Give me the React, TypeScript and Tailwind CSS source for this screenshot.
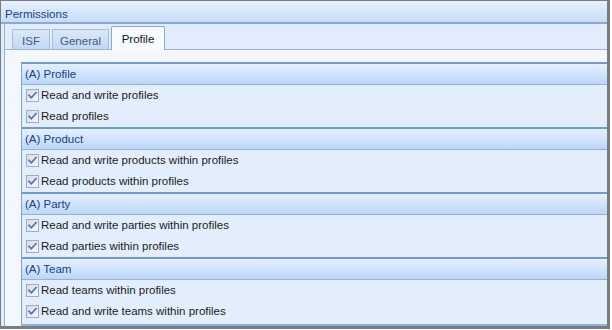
import React from 'react';

const sections = [
  { title: '(A) Profile', items: ['Read and write profiles', 'Read profiles'] },
  { title: '(A) Product', items: ['Read and write products within profiles', 'Read products within profiles'] },
  { title: '(A) Party', items: ['Read and write parties within profiles', 'Read parties within profiles'] },
  { title: '(A) Team', items: ['Read teams within profiles', 'Read and write teams within profiles'] },
];

function CheckBox() {
  return (
    <svg width="13" height="13" viewBox="0 0 13 13" className="shrink-0">
      <defs>
        <linearGradient id="cbfill" x1="0" y1="0" x2="1" y2="1">
          <stop offset="0" stopColor="#d6dbe2" />
          <stop offset="1" stopColor="#f8f9fb" />
        </linearGradient>
      </defs>
      <rect x="0.5" y="0.5" width="12" height="12" fill="url(#cbfill)" stroke="#a3acb8" />
      <path d="M3 6.3 L5.3 8.8 L10 3.6" fill="none" stroke="#4a74c9" strokeWidth="1.7" strokeLinecap="square" />
    </svg>
  );
}

function Section({ title, items }: { title: string; items: string[] }) {
  return (
    <div>
      <div className="h-[23px] border-t-2 border-t-[#6f9bd3] border-b border-b-[#8fb3e0] bg-gradient-to-b from-[#e5f0ff] to-[#bdd7f7] flex items-center pl-[3px] pt-[2px] text-[#15428b]">
        {title}
      </div>
      {items.map((item) => (
        <div key={item} className="h-[21px] flex items-center gap-[2px] pl-[4px] text-[#1b1b1b]">
          <CheckBox />
          <span>{item}</span>
        </div>
      ))}
    </div>
  );
}

export default function App() {
  return (
    <div className="w-[612px] h-[330px] bg-white font-['Liberation_Sans',Arial,sans-serif] text-[11.5px] leading-none">
      <div className="w-[610px] h-[329px] border-l border-t border-r-[3px] border-b-[3px] border-[#7c7c7c] bg-[#e1edfd] flex flex-col overflow-hidden">
        {/* Title bar */}
        <div className="h-[23px] shrink-0 border-b-2 border-b-[#88aad8] bg-gradient-to-b from-[#e6f1ff] to-[#c7ddf8] flex items-center pl-[4px] pt-[6px] text-[#15428b]">
          Permissions
        </div>

        {/* Tab control */}
        <div className="flex-1 ml-[3px] border-l border-l-[#94b2d9] flex flex-col">
          <div className="h-[26px] shrink-0 flex items-end pl-[7px] gap-[2px] border-b border-b-[#9bb4d6]">
            <div className="h-[20px] w-[38px] border border-b-0 border-[#a2bde2] bg-gradient-to-b from-[#dbe8f9] to-[#c3d8f3] flex items-center justify-center pt-[4px] text-[#3b5a86]">
              ISF
            </div>
            <div className="h-[20px] w-[57px] border border-b-0 border-[#a2bde2] bg-gradient-to-b from-[#dbe8f9] to-[#c3d8f3] flex items-center justify-center pt-[4px] text-[#3b5a86]">
              General
            </div>
            <div className="h-[24px] w-[54px] -mb-px border border-b-0 border-[#8aa9d6] rounded-t-[2px] bg-[#f7faff] flex items-center justify-center pt-[3px] text-[#111]">
              Profile
            </div>
          </div>

          <div className="flex-1 bg-[#f4f8fe] pl-[16px] pt-[12px] flex flex-col">
            <div className="flex-1 border-l border-[#7ea5d8] border-b-2 border-b-[#8fb3e0] bg-[#e3eefd]">
              {sections.map((s) => (
                <Section key={s.title} title={s.title} items={s.items} />
              ))}
            </div>
          </div>
        </div>
      </div>
    </div>
  );
}
